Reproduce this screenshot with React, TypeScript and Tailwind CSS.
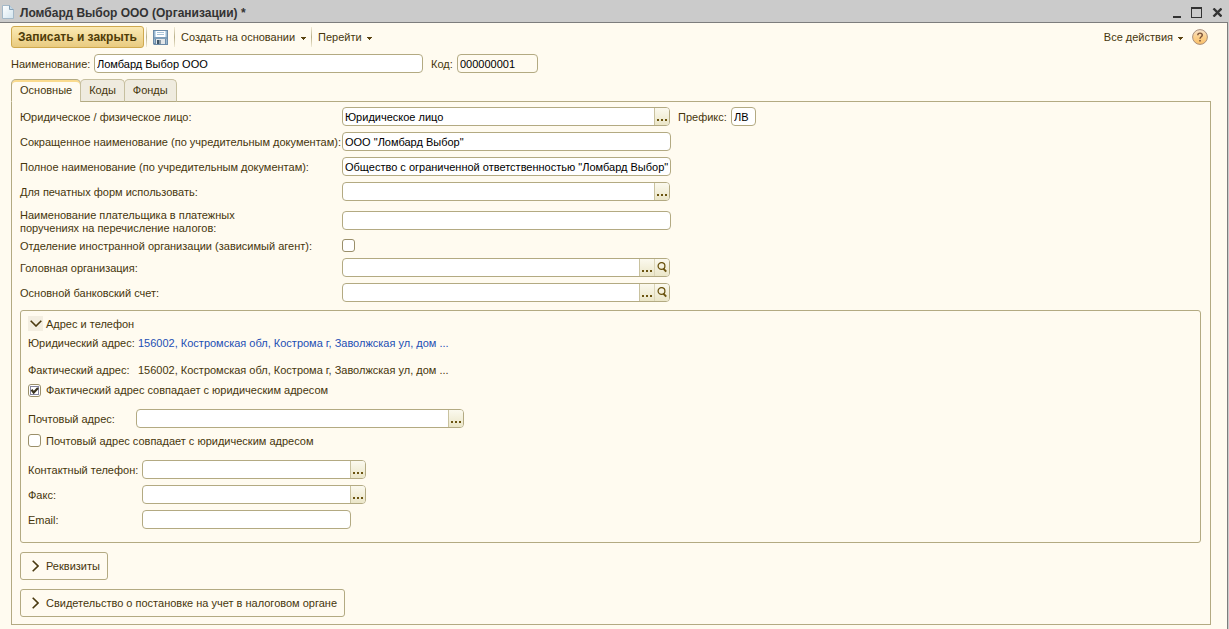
import type { ReactNode } from 'react'
import clsx from 'clsx'

type FieldProps = {
  id: string
  value?: string
  className?: string
  dots?: boolean
  search?: boolean
  readOnly?: boolean
}

const tabs = ['Основные', 'Коды', 'Фонды']

const Caret = () => (
  <svg width="5" height="3" viewBox="0 0 5 3" className="mt-[2px]" shapeRendering="crispEdges" aria-hidden="true">
    <path d="M0 0h5v1h-1v1h-1v1h-1v-1h-1v-1h-1z" fill="#5a4310" />
  </svg>
)

const Dots = () => (
  <svg width="10" height="2" viewBox="0 0 10 2" aria-hidden="true">
    <path d="M0 0h2v2H0zM4 0h2v2H4zM8 0h2v2H8z" fill="#6b5410" />
  </svg>
)

const Magnifier = () => (
  <svg width="10" height="11" viewBox="0 0 10 11" fill="none" stroke="#6b5410" aria-hidden="true">
    <circle cx="4.5" cy="4" r="3.4" strokeWidth="1.3" />
    <path d="M6.4 6.6l2.8 3" strokeWidth="2" />
  </svg>
)

const Field = ({ id, value = '', className, dots, search, readOnly }: FieldProps) => (
  <div
    className={clsx(
      'flex h-[19px] shrink-0 overflow-hidden rounded border border-[#b3aa82]',
      readOnly ? 'bg-[#fffbf0]' : 'bg-white',
      className,
    )}
  >
    <input
      id={id}
      type="text"
      defaultValue={value}
      readOnly={readOnly}
      className="min-w-0 flex-1 bg-transparent pt-px pl-[2px] text-black outline-none"
    />
    {dots && (
      <button
        type="button"
        aria-label="Выбрать"
        className="flex w-[15px] items-end justify-center border-l border-[#c9c29f] bg-linear-to-b from-[#fbf9ee] to-[#ebe6c8] pb-1"
      >
        <Dots />
      </button>
    )}
    {search && (
      <button
        type="button"
        aria-label="Открыть"
        className="flex w-[15px] items-center justify-center border-l border-[#dcd6b8] bg-linear-to-b from-[#fbf9ee] to-[#ebe6c8]"
      >
        <Magnifier />
      </button>
    )}
  </div>
)

const Checkbox = ({ id, checked }: { id: string; checked?: boolean }) => (
  <span className="relative block size-[13px] shrink-0">
    <input
      id={id}
      type="checkbox"
      defaultChecked={checked}
      className="peer block size-[13px] appearance-none rounded-[3px] border border-[#9a8f6a] bg-white"
    />
    <svg
      viewBox="0 0 13 13"
      className="pointer-events-none absolute inset-0 hidden size-[13px] peer-checked:block"
      aria-hidden="true"
    >
      <rect x="2.5" y="2.5" width="8" height="8" fill="none" stroke="#0a0a3c" strokeDasharray="1 1" />
      <path d="M3.5 5.8l2.2 2.7L10 4" fill="none" stroke="#3a3320" strokeWidth="2.2" />
    </svg>
  </span>
)

type RowProps = {
  id: string
  label: ReactNode
  height?: string
  labelWidth?: string
  children: ReactNode
}

const Row = ({ id, label, height = 'h-[25px]', labelWidth = 'w-[322px]', children }: RowProps) => (
  <div className={clsx('flex items-center', height)}>
    <label htmlFor={id} className={clsx('shrink-0 pt-[2px] whitespace-nowrap', labelWidth)}>
      {label}
    </label>
    {children}
  </div>
)

const Separator = () => (
  <span className="block h-5 w-px bg-linear-to-b from-[#f1ebd6] via-[#b9b08a] to-[#f1ebd6]" />
)

const Collapsed = ({ title }: { title: string }) => (
  <button
    type="button"
    className="flex h-7 items-center gap-[7px] rounded-[3px] border border-[#b3aa82] pr-[7px] pl-[11px]"
  >
    <svg width="7" height="12" viewBox="0 0 7 12" fill="none" stroke="#4a3a10" strokeWidth="1.6">
      <path d="M0.7 0.7L6 6L0.7 11.3" />
    </svg>
    {title}
  </button>
)

const TitleBar = () => (
  <header className="flex h-[23px] items-center border-b border-[#7d7d7d] bg-[#cbcbcb] pt-[2px] pr-[6px] pl-[2px]">
    <svg width="12" height="14" viewBox="0 0 12 14" aria-hidden="true">
      <defs>
        <linearGradient id="sheet" x1="0" y1="0" x2="1" y2="1">
          <stop offset="0" stopColor="#ffffff" />
          <stop offset="1" stopColor="#d2e4ee" />
        </linearGradient>
      </defs>
      <path d="M0.5 0.5H7.5L11.5 4.5V13.5H0.5Z" fill="url(#sheet)" stroke="#a3b8c8" />
      <path d="M7.5 0.5V4.5H11.5" fill="#c3d8e6" stroke="#86a0b5" />
    </svg>
    <h1 className="ml-[6px] pt-px text-xs font-bold text-[#333]">Ломбард Выбор ООО (Организации) *</h1>
    <div className="ml-auto flex items-center gap-[10px]">
      <button type="button" aria-label="Свернуть">
        <svg width="8" height="11" viewBox="0 0 8 11">
          <path d="M0 9h8v2H0z" fill="#333" />
        </svg>
      </button>
      <button type="button" aria-label="Развернуть">
        <svg width="11" height="11" viewBox="0 0 11 11">
          <path d="M0 0h11v11H0zM1 2v8h9V2z" fill="#333" fillRule="evenodd" />
        </svg>
      </button>
      <button type="button" aria-label="Закрыть">
        <svg width="10" height="9" viewBox="0 0 10 9" stroke="#333" strokeWidth="2.4">
          <path d="M1.5 0.5l8 8M9.5 0.5l-8 8" />
        </svg>
      </button>
    </div>
  </header>
)

const Toolbar = () => (
  <div className="flex h-[22px] items-center">
    <button
      type="button"
      className="h-[22px] rounded-[3px] border border-[#cfa94e] bg-linear-to-b from-[#fbeab4] to-[#e9cb80] px-[6px] text-xs font-bold text-[#4f3c08]"
    >
      Записать и закрыть
    </button>
    <div className="ml-[2px] flex items-center gap-[6px]">
      <Separator />
      <button type="button" aria-label="Записать">
        <svg width="15" height="15" viewBox="0 0 15 15">
          <path d="M0 0h15v15H1L0 14z" fill="#6d8ca8" />
          <path d="M1 1h1v12H1zM13 1h1v13h-1z" fill="#9db9d0" />
          <path d="M2 1h11v6H2z" fill="#c4dcec" />
          <path d="M3 1h9v6H3z" fill="#fff" />
          <path d="M4 2.5h7M4 4.5h7" stroke="#a8c4d8" />
          <path d="M1 7h13v2H1z" fill="#7f9fba" />
          <path d="M3 9h9v5H3z" fill="#e2e6e8" />
          <path d="M4 10h4v4H4z" fill="#3f5668" />
          <path d="M6 10h2v4H6z" fill="#8b9aa6" />
        </svg>
      </button>
      <Separator />
    </div>
    <button type="button" className="mr-[5px] ml-[6px] flex items-center gap-[6px]">
      Создать на основании
      <Caret />
    </button>
    <Separator />
    <button type="button" className="ml-[6px] flex items-center gap-[5px]">
      Перейти
      <Caret />
    </button>
    <button type="button" className="ml-auto flex items-center gap-[5px]">
      Все действия
      <Caret />
    </button>
    <button type="button" aria-label="Справка" className="mr-2 ml-[9px]">
      <svg width="16" height="16" viewBox="0 0 16 16">
        <defs>
          <linearGradient id="help" x1="0" y1="0" x2="0" y2="1">
            <stop offset="0" stopColor="#f6e3cd" />
            <stop offset="0.5" stopColor="#fbd08c" />
            <stop offset="1" stopColor="#fbc069" />
          </linearGradient>
        </defs>
        <circle cx="8" cy="8" r="7.4" fill="url(#help)" stroke="#a98f7c" />
        <path d="M5.8 6.2C5.8 3.4 10.3 3.4 10.3 6.1C10.3 7.8 8 7.8 8 9.8" fill="none" stroke="#7a5238" strokeWidth="1.4" />
        <path d="M7.2 11h1.6v1.5H7.2z" fill="#7a5238" />
      </svg>
    </button>
  </div>
)

const Tabs = () => (
  <div role="tablist" className="relative -mb-px flex h-[23px]">
    {tabs.map((tab, i) => (
      <button
        key={tab}
        type="button"
        role="tab"
        aria-selected={i === 0}
        className={clsx(
          'rounded-t-[5px] border px-2 pb-px',
          i === 0
            ? 'border-[#b3aa82] border-b-transparent bg-[#fffbf0] shadow-[inset_0_2px_0_#fadb8e]'
            : '-ml-px border-[#c6bf9f] border-b-[#b3aa82] bg-[#efebdf]',
        )}
      >
        {tab}
      </button>
    ))}
  </div>
)

const AddressGroup = () => (
  <section className="mt-[5px] rounded-[3px] border border-[#b3aa82] px-[7px] pt-[5px] pb-[10px]">
    <button type="button" className="flex h-[15px] items-center gap-[3px]">
      <span className="flex size-[15px] items-center justify-center bg-[#f3eee1]">
        <svg width="12" height="7" viewBox="0 0 12 7" fill="none" stroke="#4a3a10" strokeWidth="1.6">
          <path d="M0.7 0.7L6 6L11.3 0.7" />
        </svg>
      </span>
      <span className="pt-[2px]">Адрес и телефон</span>
    </button>
    <div className="flex h-6 items-center">
      <span className="w-[110px]">Юридический адрес:</span>
      <a href="#" className="text-[#1d4fb4]">
        156002, Костромская обл, Кострома г, Заволжская ул, дом ...
      </a>
    </div>
    <div className="mt-[3px] flex h-6 items-center">
      <span className="w-[110px]">Фактический адрес:</span>
      <span>156002, Костромская обл, Кострома г, Заволжская ул, дом ...</span>
    </div>
    <div className="flex h-[17px] items-center gap-[5px]">
      <Checkbox id="actual-same" checked />
      <label htmlFor="actual-same">Фактический адрес совпадает с юридическим адресом</label>
    </div>
    <div className="mt-[7px]">
      <Row id="postal" label="Почтовый адрес:" labelWidth="w-[108px]">
        <Field id="postal" className="w-[328px]" dots />
      </Row>
    </div>
    <div className="flex h-[19px] items-center gap-[5px]">
      <Checkbox id="postal-same" />
      <label htmlFor="postal-same" className="pt-[2px]">
        Почтовый адрес совпадает с юридическим адресом
      </label>
    </div>
    <div className="mt-[7px]">
      <Row id="phone" label="Контактный телефон:" labelWidth="w-[114px]">
        <Field id="phone" className="w-56" dots />
      </Row>
      <Row id="fax" label="Факс:" labelWidth="w-[114px]">
        <Field id="fax" className="w-56" dots />
      </Row>
      <Row id="email" label="Email:" labelWidth="w-[114px]">
        <Field id="email" className="w-[209px]" />
      </Row>
    </div>
  </section>
)

const App = () => {
  return (
    <div className="flex min-h-screen flex-col border-r border-[#cbcbcb] bg-[#fffbf0] font-['Liberation_Sans',Arial,sans-serif] text-[11px] leading-[13px] text-[#46360c]">
      <TitleBar />
      <main className="flex-1 border-r border-[#7d7d7d] px-[11px] pt-[3px] pb-1">
        <Toolbar />
        <div className="mt-[6px] flex h-[19px] items-center">
          <label htmlFor="name" className="w-[83px] pt-[2px]">
            Наименование:
          </label>
          <Field id="name" value="Ломбард Выбор ООО" className="w-[329px]" />
          <label htmlFor="code" className="ml-2 w-[26px] pt-[2px]">
            Код:
          </label>
          <Field id="code" value="000000001" className="w-[81px]" readOnly />
        </div>
        <div className="mt-[6px] mr-[5px]">
          <Tabs />
          <div className="border border-[#b3aa82] pt-[2px] pr-[9px] pb-[7px] pl-2">
            <Row id="kind" label="Юридическое / физическое лицо:">
              <Field id="kind" value="Юридическое лицо" className="w-[328px]" dots />
              <label htmlFor="prefix" className="ml-2 w-[53px] pt-[2px]">
                Префикс:
              </label>
              <Field id="prefix" value="ЛВ" className="w-[25px]" />
            </Row>
            <Row id="short-name" label="Сокращенное наименование (по учредительным документам):">
              <Field id="short-name" value='ООО "Ломбард Выбор"' className="w-[329px]" />
            </Row>
            <Row id="full-name" label="Полное наименование (по учредительным документам):">
              <Field
                id="full-name"
                value='Общество с ограниченной ответственностью "Ломбард Выбор"'
                className="w-[329px]"
              />
            </Row>
            <Row id="print-name" label="Для печатных форм использовать:">
              <Field id="print-name" className="w-[328px]" dots />
            </Row>
            <Row
              id="payer"
              height="h-[33px]"
              label={
                <>
                  Наименование плательщика в платежных
                  <br />
                  поручениях на перечисление налогов:
                </>
              }
            >
              <Field id="payer" className="w-[329px]" />
            </Row>
            <Row id="foreign" height="mb-px h-[17px]" label="Отделение иностранной организации (зависимый агент):">
              <Checkbox id="foreign" />
            </Row>
            <Row id="head" label="Головная организация:">
              <Field id="head" className="w-[328px]" dots search />
            </Row>
            <Row id="bank" label="Основной банковский счет:">
              <Field id="bank" className="w-[328px]" dots search />
            </Row>
            <AddressGroup />
            <div className="mt-[9px] flex flex-col items-start gap-[9px]">
              <Collapsed title="Реквизиты" />
              <Collapsed title="Свидетельство о постановке на учет в налоговом органе" />
            </div>
          </div>
        </div>
      </main>
    </div>
  )
}

export default App
